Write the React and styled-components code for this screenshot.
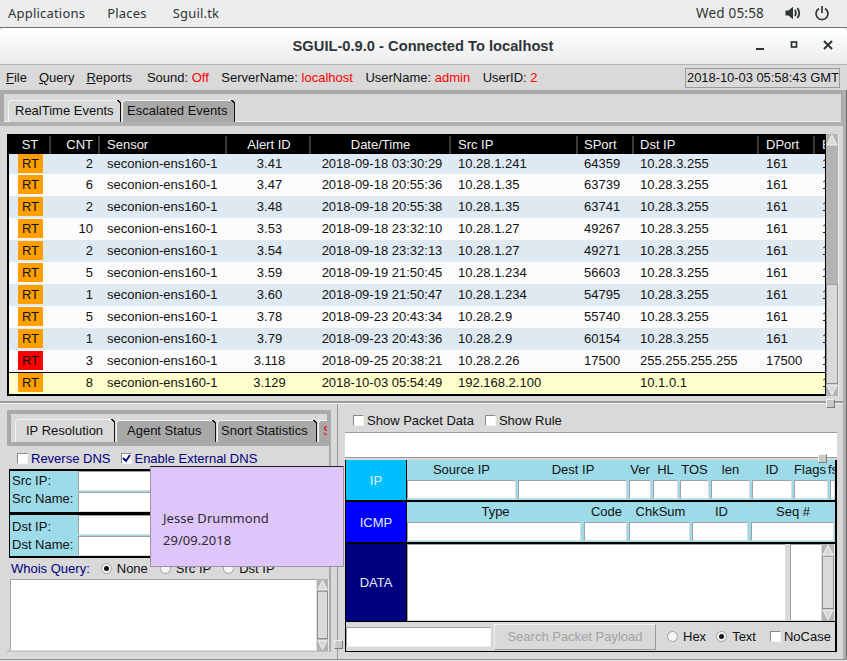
import React from "react";
import styled, { createGlobalStyle } from "styled-components";

const GlobalStyle = createGlobalStyle`
  html, body {
    margin: 0;
    padding: 0;
    width: 847px;
    height: 661px;
    overflow: hidden;
    background: #d9d9d9;
  }
  * {
    box-sizing: border-box;
  }
`;

const COLS = "42px 49px 127px 84px 140px 127px 56px 125px 56px 20px";

const rows = [
  ["2", "3.41", "2018-09-18 03:30:29", "10.28.1.241", "64359", "10.28.3.255", "161"],
  ["6", "3.47", "2018-09-18 20:55:36", "10.28.1.35", "63739", "10.28.3.255", "161"],
  ["2", "3.48", "2018-09-18 20:55:38", "10.28.1.35", "63741", "10.28.3.255", "161"],
  ["10", "3.53", "2018-09-18 23:32:10", "10.28.1.27", "49267", "10.28.3.255", "161"],
  ["2", "3.54", "2018-09-18 23:32:13", "10.28.1.27", "49271", "10.28.3.255", "161"],
  ["5", "3.59", "2018-09-19 21:50:45", "10.28.1.234", "56603", "10.28.3.255", "161"],
  ["1", "3.60", "2018-09-19 21:50:47", "10.28.1.234", "54795", "10.28.3.255", "161"],
  ["5", "3.78", "2018-09-23 20:43:34", "10.28.2.9", "55740", "10.28.3.255", "161"],
  ["1", "3.79", "2018-09-23 20:43:36", "10.28.2.9", "60154", "10.28.3.255", "161"],
  ["3", "3.118", "2018-09-25 20:38:21", "10.28.2.26", "17500", "255.255.255.255", "17500"],
  ["8", "3.129", "2018-10-03 05:54:49", "192.168.2.100", "", "10.1.0.1", ""],
];

const Page = styled.div`
  position: relative;
  width: 847px;
  height: 661px;
  overflow: hidden;
  background: #d9d9d9;
  color: #000;
  font-family: "Liberation Sans", Arial, sans-serif;
  font-size: 13px;
`;

const TopBar = styled.div`
  display: flex;
  align-items: center;
  height: 28px;
  padding: 0 17px 1px 8px;
  background: #ededed;
  border-bottom: 1px solid #6f7173;
  color: #2e3436;
  font-family: "Noto Sans", sans-serif;
  font-size: 13px;
`;

const TopItem = styled.span`
  margin-right: ${(p) => p.$gap || 24}px;
  letter-spacing: 0.2px;
`;

const TopClock = styled.span`
  margin-left: auto;
  margin-right: 21px;
  font-size: 13.5px;
  letter-spacing: 0.2px;
`;

const TopIcon = styled.svg`
  display: block;
  width: 16px;
  height: 16px;
  margin-left: ${(p) => p.$gap || 0}px;
  color: #2e3436;
`;

const TitleBar = styled.div`
  position: relative;
  display: flex;
  align-items: center;
  justify-content: center;
  height: 37px;
  padding-right: 1px;
  background: linear-gradient(#ffffff, #ececec);
  border-bottom: 1px solid #b4b4b4;
  border-radius: 4px 4px 0 0;
  color: #2e3436;
  font-size: 14.7px;
  font-weight: 700;
`;

const WinButtons = styled.div`
  position: absolute;
  right: 13px;
  top: 11px;
  display: flex;
  gap: 22px;
  align-items: center;
`;

const WinIcon = styled.svg`
  display: block;
  width: 12px;
  height: 12px;
`;

const MenuRow = styled.div`
  display: flex;
  align-items: center;
  height: 25px;
  padding: 0 7px 0 6px;
  font-size: 13px;
  color: #111;
`;

const MenuItem = styled.span`
  margin-right: 12px;
  &:first-letter {
    text-decoration: underline;
  }
`;

const Status = styled.span`
  margin-left: ${(p) => p.$left || 0}px;
  margin-right: 12.5px;
`;

const Red = styled.span`
  color: #ff0000;
`;

const Clock = styled.div`
  margin-left: auto;
  width: 155px;
  height: 20px;
  padding-left: 1px;
  line-height: 18px;
  letter-spacing: -0.06px;
  border: 1px solid;
  border-color: #f4f4f4 #8c8c8c #8c8c8c #f4f4f4;
  outline: 1px solid #9a9a9a;
  outline-offset: -1px;
  white-space: nowrap;
`;

const TabBand = styled.div`
  display: flex;
  align-items: flex-end;
  height: 32px;
  padding: 0 0 0 4px;
  background: #d9d9d9;
  border: 4px solid #a9a9a9;
  border-bottom: 0;
  border-right-width: 6px;
  box-shadow: inset 0 -1px 0 #f2f2f2;
`;

const Tab = styled.div`
  position: relative;
  display: flex;
  align-items: center;
  flex: none;
  width: ${(p) => p.$w}px;
  height: ${(p) => (p.$tall ? 23 : 22)}px;
  padding: 0 0 2px ${(p) => p.$pad || 5}px;
  margin-right: 1px;
  background: ${(p) => (p.$active ? "#d9d9d9" : "#a8a8a8")};
  border-top: 1px solid #f4f4f4;
  border-left: 1px solid #f4f4f4;
  border-right: 1px solid #111;
  border-radius: 4px 0 0 0;
  color: #111;
  font-size: 13px;
  white-space: nowrap;
  &::after {
    content: "";
    position: absolute;
    top: -1px;
    right: -1px;
    width: 4px;
    height: 4px;
    background: linear-gradient(45deg, transparent 45%, #111 45%, #111 65%, #d9d9d9 65%);
  }
`;

const TablePane = styled.div`
  display: flex;
  height: 281px;
  padding: 8px 7px 0 7px;
  border-top: 4px solid #b0b0b0;
  border-bottom: 2px solid #9a9a9a;
`;

const TableFrame = styled.div`
  position: relative;
  width: 819px;
  height: 262px;
  border: 2px solid #000;
  border-right-width: 1px;
  border-bottom-width: 1px;
  overflow: hidden;
  background: #000;
`;

const Grid = styled.div`
  display: grid;
  position: relative;
  z-index: ${(p) => p.$z || 0};
  grid-template-columns: ${COLS};
  width: 840px;
  height: ${(p) => p.$h}px;
  padding-bottom: ${(p) => p.$pb || 0}px;
  align-items: center;
  background: ${(p) => p.$bg};
  font-size: 13px;
  color: ${(p) => p.$fg || "#111"};
`;

const HeadCell = styled.div`
  height: 18px;
  line-height: 18px;
  padding: 0 ${(p) => p.$pad || 6}px;
  padding-left: ${(p) => (p.$pad || 6) + (p.$shift || 0)}px;
  text-align: ${(p) => p.$align || "left"};
  border-right: 2px solid #3c3c3c;
  white-space: nowrap;
  overflow: hidden;
`;

const Cell = styled.div`
  padding: 0 ${(p) => p.$pad || 6}px;
  padding-left: ${(p) => (p.$pad || 6) + (p.$shift || 0)}px;
  text-align: ${(p) => p.$align || "left"};
  white-space: nowrap;
`;

const Badge = styled.div`
  width: 25px;
  height: 19px;
  margin-left: 3px;
  line-height: 19px;
  text-align: center;
  background: ${(p) => p.$bg};
`;

const LastRow = styled.div`
  border-top: 1px solid #000;
  border-bottom: 1px solid #000;
  background: #ffffcc;
  height: 23px;
`;

const VScroll = styled.div`
  display: flex;
  flex-direction: column;
  flex: none;
  width: ${(p) => p.$w || 12}px;
  height: ${(p) => p.$h}px;
  background: #b3b3b3;
  border-right: 1px solid #ececec;
`;

const Arrow = styled.svg`
  display: block;
  width: 100%;
  height: 12px;
  flex: none;
`;

const Thumb = styled.div`
  flex: 1;
  margin-top: ${(p) => p.$top || 0}px;
  background: #d9d9d9;
  border: 1px solid #8f8f8f;
  border-top-color: #a0a0a0;
`;

const Trough = styled.div`
  flex: 1;
  display: flex;
  flex-direction: column;
  background: #b3b3b3;
`;

const Lower = styled.div`
  display: flex;
  height: 256px;
  border-top: 1px solid #f2f2f2;
`;

const LeftPane = styled.div`
  flex: none;
  width: 338px;
  height: 100%;
  padding: 6px 0 0 7px;
  border-right: 1px solid #9a9a9a;
`;

const LeftInner = styled.div`
  width: 324px;
  height: 242px;
  border-right: 2px solid #a9a9a9;
  border-bottom: 2px solid #c0c0c0;
`;

const LeftTabs = styled.div`
  display: flex;
  align-items: flex-end;
  width: 324px;
  height: 36px;
  padding-left: 4px;
  border: 4px solid #a9a9a9;
  overflow: hidden;
`;

const CheckRow = styled.div`
  display: flex;
  align-items: center;
  gap: ${(p) => p.$gap || 12}px;
  height: 23px;
  padding: 1px 0 0 10px;
  color: ${(p) => p.$color || "#111"};
  font-size: 13px;
`;

const Check = styled.label`
  display: flex;
  align-items: center;
  gap: ${(p) => p.$gap || 3}px;
  white-space: nowrap;
`;

const Box = styled.span`
  display: flex;
  align-items: center;
  justify-content: center;
  flex: none;
  width: 11px;
  height: 11px;
  background: #fff;
  border: 1px solid;
  border-color: #8a8a8a #f2f2f2 #f2f2f2 #8a8a8a;
  color: #00007f;
`;

const HostBlock = styled.div`
  display: grid;
  grid-template-columns: 68px 1fr;
  grid-auto-rows: 20px;
  row-gap: 1px;
  width: 320px;
  margin-left: 2px;
  background: #9ddbe9;
  border-left: 1px solid #000;
  border-top: ${(p) => (p.$first ? "2px solid #000" : "0")};
  border-bottom: ${(p) => (p.$first ? "3px" : "2px")} solid #000;
  font-size: 13px;
  color: #111;
`;

const HostLabel = styled.div`
  padding-left: 2px;
  margin-top: ${(p) => p.$nudge || 0}px;
  line-height: 20px;
  white-space: nowrap;
`;

const Field = styled.div`
  background: #fff;
  border: 1px solid;
  border-color: #a0a0a0 #dcdcdc #dcdcdc #a0a0a0;
  height: ${(p) => p.$h || 19}px;
  margin-left: ${(p) => p.$ml || 0}px;
  margin-right: ${(p) => p.$mr || 0}px;
`;

const RadioRow = styled.div`
  display: flex;
  align-items: center;
  height: 21px;
  padding-left: 4px;
  font-size: 13px;
  color: #111;
`;

const Query = styled.span`
  color: #00007f;
  margin-right: 11px;
`;

const Radio = styled.span`
  display: inline-flex;
  align-items: center;
  justify-content: center;
  flex: none;
  width: 11px;
  height: 11px;
  margin-right: 5px;
  border-radius: 50%;
  background: #f5f5f5;
  border: 1px solid #a0a0a0;
  &::after {
    content: "";
    display: ${(p) => (p.$on ? "block" : "none")};
    width: 5px;
    height: 5px;
    border-radius: 50%;
    background: #111;
  }
`;

const RadioLabel = styled.span`
  margin-right: ${(p) => p.$gap || 12}px;
  color: ${(p) => p.$color || "#111"};
`;

const WhoisRow = styled.div`
  display: flex;
  width: 319px;
  height: 72px;
  margin-left: 3px;
`;

const WhoisText = styled.div`
  flex: 1;
  background: #fff;
  border: 1px solid;
  border-color: #a0a0a0 #dcdcdc #dcdcdc #a0a0a0;
`;

const RightPane = styled.div`
  flex: 1;
  padding: 5px 9px 0 7px;
`;

const RightChecks = styled.div`
  display: flex;
  align-items: center;
  height: 23px;
  padding-left: 8px;
  gap: 11px;
  font-size: 13px;
  color: #111;
`;

const PacketLine = styled.div`
  width: 492px;
  height: 26px;
  background: #fff;
  border-top: 1px solid #9a9a9a;
  border-bottom: 1px solid #9a9a9a;
`;

const Packet = styled.div`
  width: 492px;
  margin-top: 2px;
  border-right: 2px solid #000;
  border-left: 1px solid #000;
  border-bottom: 1px solid #000;
`;

const Section = styled.div`
  display: flex;
  height: ${(p) => p.$h}px;
  border-bottom: ${(p) => (p.$last ? 0 : "2px")} solid #000;
`;

const SectionName = styled.div`
  display: flex;
  align-items: center;
  justify-content: center;
  flex: none;
  width: 61px;
  color: #e4ecff;
  background: ${(p) => p.$bg};
  border-right: 1px solid #000;
  font-size: 13px;
`;

const Columns = styled.div`
  flex: 1;
  display: grid;
  grid-template-columns: ${(p) => p.$cols};
  grid-template-rows: 20px 20px;
  background: #9ddbe9;
  overflow: hidden;
  font-size: 13px;
  color: #111;
`;

const ColHead = styled.div`
  text-align: center;
  line-height: 19px;
  margin-right: ${(p) => p.$mr ?? 2}px;
  white-space: nowrap;
`;

const DataArea = styled.div`
  flex: 1;
  display: flex;
  background: #d9d9d9;
`;

const DataText = styled.div`
  flex: none;
  background: #fff;
  width: ${(p) => p.$w}px;
  border: 1px solid;
  border-color: #a0a0a0 #dcdcdc #dcdcdc #a0a0a0;
  margin-right: ${(p) => p.$mr || 0}px;
`;

const SearchRow = styled.div`
  display: flex;
  align-items: center;
  height: 30px;
  border-top: 1px solid #000;
  font-size: 13px;
  color: #111;
`;

const SearchInput = styled.div`
  width: 145px;
  height: 20px;
  margin-right: 3px;
  background: #fff;
  border: 1px solid;
  border-color: #a0a0a0 #f2f2f2 #f2f2f2 #a0a0a0;
`;

const SearchButton = styled.div`
  width: 162px;
  height: 26px;
  margin-right: 11px;
  line-height: 24px;
  text-align: center;
  color: #a3a3a3;
  background: #d9d9d9;
  border: 1px solid;
  border-color: #f2f2f2 #9a9a9a #9a9a9a #f2f2f2;
  white-space: nowrap;
`;

const Sash = styled.div`
  position: absolute;
  left: ${(p) => p.$x}px;
  top: ${(p) => p.$y}px;
  width: 9px;
  height: 9px;
  background: #c8c8c8;
  border: 1px solid;
  border-color: #f2f2f2 #7d7d7d #7d7d7d #f2f2f2;
`;

const Note = styled.div`
  position: absolute;
  left: 150px;
  top: 466px;
  width: 194px;
  height: 101px;
  padding: 40px 0 0 12px;
  background: #dec6fb;
  border: 1px solid #9a93a4;
  border-top-color: #222;
  color: #2e2a33;
  font-family: "Noto Sans", sans-serif;
  font-size: 13px;
  letter-spacing: 0.05px;
  line-height: 22px;
`;

const BottomEdge = styled.div`
  position: absolute;
  left: 0;
  right: 0;
  bottom: 0;
  height: 2px;
  background: #e8e8e8;
  border-top: 1px solid #8a8a8a;
`;

const RightEdge = styled.div`
  position: absolute;
  top: 90px;
  right: 0;
  bottom: 0;
  width: 4px;
  background: #b0b0b0;
  border-right: 1px solid #6a6a6a;
`;

const UpArrow = () => (
  <Arrow viewBox="0 0 12 12">
    <path d="M6 1 L11 11 H1 Z" fill="#d9d9d9" stroke="#f4f4f4" />
  </Arrow>
);

const DownArrow = () => (
  <Arrow viewBox="0 0 12 12">
    <path d="M1 1 H11 L6 11 Z" fill="#d9d9d9" stroke="#f4f4f4" />
  </Arrow>
);

const Scroll = ({ h, w, top }) => (
  <VScroll $h={h} $w={w}>
    <UpArrow />
    <Trough>
      <Thumb $top={top} />
    </Trough>
    <DownArrow />
  </VScroll>
);

const EventRow = ({ row, index }) => {
  const bg = index % 2 === 0 ? "#dfe9f2" : "#fbfbfb";
  const color = index === 9 ? "#ff0000" : "#ff9f00";
  const grid = (
    <Grid
      $h={index === 0 ? 20 : index === 10 ? 21 : 22}
      $pb={index === 0 ? 6 : 2}
      $bg={index === 10 ? "#ffffcc" : bg}
    >
      <Cell>
        <Badge $bg={color}>RT</Badge>
      </Cell>
      <Cell $align="right" $pad={7}>
        {row[0]}
      </Cell>
      <Cell $pad={7}>seconion-ens160-1</Cell>
      <Cell $align="center" $shift={1}>{row[1]}</Cell>
      <Cell $align="center" $shift={2}>{row[2]}</Cell>
      <Cell $pad={7}>{row[3]}</Cell>
      <Cell>{row[4]}</Cell>
      <Cell>{row[5]}</Cell>
      <Cell $pad={7}>{row[6]}</Cell>
      <Cell $pad={7}>1</Cell>
    </Grid>
  );
  return index === 10 ? <LastRow>{grid}</LastRow> : grid;
};

const App = () => (
  <Page>
    <GlobalStyle />
    <TopBar>
      <TopItem $gap={22}>Applications</TopItem>
      <TopItem $gap={26}>Places</TopItem>
      <TopItem>Sguil.tk</TopItem>
      <TopClock>Wed 05:58</TopClock>
      <TopIcon viewBox="0 0 16 16">
        <path d="M0.5 5.5h3L8 1.8v12.4L3.5 10.5h-3z" fill="currentColor" />
        <path
          d="M10 5c1.1 2 1.1 4 0 6M12.4 3c2.2 3 2.2 7 0 10"
          fill="none"
          stroke="currentColor"
          strokeWidth="1.8"
        />
      </TopIcon>
      <TopIcon viewBox="0 0 16 16" $gap={13}>
        <path
          d="M5 3.5a6 6 0 1 0 6 0M8 1v7"
          fill="none"
          stroke="currentColor"
          strokeWidth="1.7"
        />
      </TopIcon>
    </TopBar>
    <TitleBar>
      SGUIL-0.9.0 - Connected To localhost
      <WinButtons>
        <WinIcon viewBox="0 0 12 12">
          <path d="M2 10h8" stroke="#2e3436" strokeWidth="2" />
        </WinIcon>
        <WinIcon viewBox="0 0 12 12">
          <rect x="3.5" y="3" width="5" height="5" fill="none" stroke="#2e3436" strokeWidth="1.7" />
        </WinIcon>
        <WinIcon viewBox="0 0 12 12">
          <path d="M2 2l8 8M10 2l-8 8" stroke="#2e3436" strokeWidth="2" />
        </WinIcon>
      </WinButtons>
    </TitleBar>
    <MenuRow>
      <MenuItem>File</MenuItem>
      <MenuItem>Query</MenuItem>
      <MenuItem>Reports</MenuItem>
      <Status $left={3}>
        Sound: <Red>Off</Red>
      </Status>
      <Status>
        ServerName: <Red>localhost</Red>
      </Status>
      <Status>
        UserName: <Red>admin</Red>
      </Status>
      <Status>
        UserID: <Red>2</Red>
      </Status>
      <Clock>2018-10-03 05:58:43 GMT</Clock>
    </MenuRow>
    <TabBand>
      <Tab $active $w={113} $pad={6}>RealTime Events</Tab>
      <Tab $w={113} $pad={4}>Escalated Events</Tab>
    </TabBand>
    <TablePane>
      <TableFrame>
        <Grid $h={18} $bg="#000" $fg="#f2f2f2" $z={1}>
          <HeadCell $align="center" $shift={2}>ST</HeadCell>
          <HeadCell $align="right" $pad={5}>CNT</HeadCell>
          <HeadCell $pad={7}>Sensor</HeadCell>
          <HeadCell $align="center" $shift={2}>Alert ID</HeadCell>
          <HeadCell $align="center" $shift={1}>Date/Time</HeadCell>
          <HeadCell $pad={7}>Src IP</HeadCell>
          <HeadCell>SPort</HeadCell>
          <HeadCell>Dst IP</HeadCell>
          <HeadCell $pad={7}>DPort</HeadCell>
          <HeadCell $pad={7}>Event</HeadCell>
        </Grid>
        {rows.map((row, i) => (
          <EventRow key={row[2]} row={row} index={i} />
        ))}
      </TableFrame>
      <Scroll h={262} w={13} top={138} />
    </TablePane>
    <Lower>
      <LeftPane>
        <LeftInner>
          <LeftTabs>
            <Tab $active $tall $w={100} $pad={10}>IP Resolution</Tab>
            <Tab $w={100} $pad={10}>Agent Status</Tab>
            <Tab $w={100} $pad={3}>Snort Statistics</Tab>
            <Tab $w={30} $pad={4}>
              <Red>S</Red>
            </Tab>
          </LeftTabs>
          <CheckRow $color="#00007f" $gap={11}>
            <Check>
              <Box />
              Reverse DNS
            </Check>
            <Check $gap={2}>
              <Box>
                <svg width="9" height="9" viewBox="0 0 9 9">
                  <path d="M1 4l3 3 4-6" fill="none" stroke="#00007f" strokeWidth="1.8" />
                </svg>
              </Box>
              Enable External DNS
            </Check>
          </CheckRow>
          <HostBlock $first>
            <HostLabel>Src IP:</HostLabel>
            <Field $h={20} />
            <HostLabel $nudge={-3}>Src Name:</HostLabel>
            <Field $h={20} />
          </HostBlock>
          <HostBlock>
            <HostLabel $nudge={2}>Dst IP:</HostLabel>
            <Field $h={20} />
            <HostLabel $nudge={-1}>Dst Name:</HostLabel>
            <Field $h={20} />
          </HostBlock>
          <RadioRow>
            <Query>Whois Query:</Query>
            <Radio $on />
            <RadioLabel>None</RadioLabel>
            <Radio />
            <RadioLabel>Src IP</RadioLabel>
            <Radio />
            <RadioLabel>Dst IP</RadioLabel>
          </RadioRow>
          <WhoisRow>
            <WhoisText />
            <Scroll h={72} w={12} top={0} />
          </WhoisRow>
        </LeftInner>
      </LeftPane>
      <RightPane>
        <RightChecks>
          <Check>
            <Box />
            Show Packet Data
          </Check>
          <Check>
            <Box />
            Show Rule
          </Check>
        </RightChecks>
        <PacketLine />
        <Packet>
          <Section $h={42}>
            <SectionName $bg="#00bfff">IP</SectionName>
            <Columns $cols="111px 111px 24px 27px 31px 41px 42px 34px 7px">
              <ColHead>Source IP</ColHead>
              <ColHead $mr={1}>Dest IP</ColHead>
              <ColHead>Ver</ColHead>
              <ColHead>HL</ColHead>
              <ColHead>TOS</ColHead>
              <ColHead>len</ColHead>
              <ColHead>ID</ColHead>
              <ColHead>Flags</ColHead>
              <ColHead>fs</ColHead>
              <Field $mr={2} />
              <Field $mr={2} />
              <Field $mr={2} />
              <Field $mr={2} />
              <Field $mr={2} />
              <Field $mr={2} />
              <Field $mr={2} />
              <Field />
              <Field $ml={2} />
            </Columns>
          </Section>
          <Section $h={42}>
            <SectionName $bg="#0000ff">ICMP</SectionName>
            <Columns $cols="177px 45px 63px 59px 84px">
              <ColHead $mr={0}>Type</ColHead>
              <ColHead $mr={0}>Code</ColHead>
              <ColHead $mr={0}>ChkSum</ColHead>
              <ColHead $mr={0}>ID</ColHead>
              <ColHead $mr={0}>Seq #</ColHead>
              <Field $mr={3} />
              <Field $mr={2} />
              <Field $mr={2} />
              <Field $mr={3} />
              <Field $mr={1} />
            </Columns>
          </Section>
          <Section $h={77} $last>
            <SectionName $bg="#00007f">DATA</SectionName>
            <DataArea>
              <DataText $mr={4} $w={379} />
              <DataText $w={32} />
              <Scroll h={77} w={13} top={0} />
            </DataArea>
          </Section>
          <SearchRow>
            <SearchInput />
            <SearchButton>Search Packet Payload</SearchButton>
            <Radio />
            <RadioLabel $gap={10}>Hex</RadioLabel>
            <Radio $on />
            <RadioLabel $gap={14}>Text</RadioLabel>
            <Check>
              <Box />
              NoCase
            </Check>
          </SearchRow>
        </Packet>
      </RightPane>
    </Lower>
    <RightEdge />
    <Sash $x={826} $y={399} />
    <Sash $x={818} $y={454} />
    <Sash $x={334} $y={640} />
    <Note>
      Jesse Drummond
      <br />
      29/09.2018
    </Note>
    <BottomEdge />
  </Page>
);

export default App;
